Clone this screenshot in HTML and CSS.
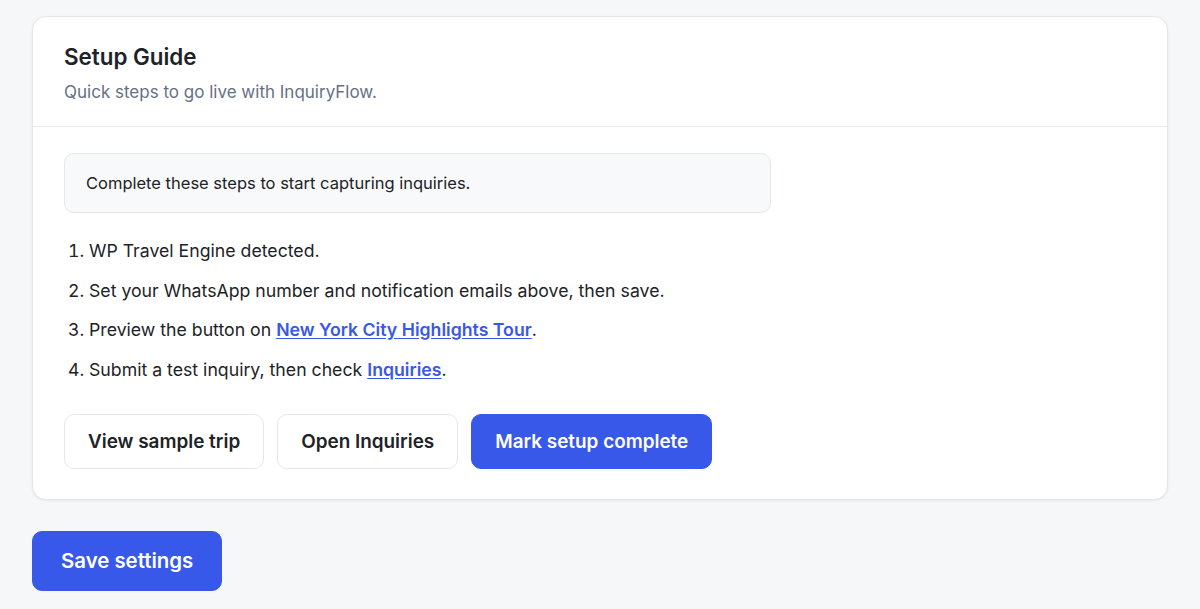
FILE: index.html
```html
<!DOCTYPE html>
<html lang="en">
<head>
<meta charset="utf-8">
<title>Setup Guide</title>
<link rel="stylesheet" href="styles.css">
</head>
<body>
<main class="page">
  <section class="card">
    <header class="card-head">
      <h2 class="card-title">Setup Guide</h2>
      <p class="card-sub">Quick steps to go live with InquiryFlow.</p>
    </header>
    <div class="card-body">
      <div class="notice">Complete these steps to start capturing inquiries.</div>
      <ol class="steps">
        <li>WP Travel Engine detected.</li>
        <li>Set your WhatsApp number and notification emails above, then save.</li>
        <li>Preview the button on <a href="#">New York City Highlights Tour</a>.</li>
        <li>Submit a test inquiry, then check <a href="#">Inquiries</a>.</li>
      </ol>
      <div class="actions">
        <button class="btn btn-ghost">View sample trip</button>
        <button class="btn btn-ghost">Open Inquiries</button>
        <button class="btn btn-primary">Mark setup complete</button>
      </div>
    </div>
  </section>
  <div class="footer">
    <button class="btn btn-primary btn-lg">Save settings</button>
  </div>
</main>
</body>
</html>
```
FILE: styles.css
```css
* { box-sizing: border-box; }
html, body { margin: 0; }
body {
  background: #f6f7f9;
  font-family: Inter, "Noto Sans", sans-serif;
  color: #1d2327;
}
.page {
  padding: 16px 32px 0 32px;
}
.card {
  background: #fff;
  border: 1px solid #e3e6ea;
  border-radius: 14px;
  box-shadow: 0 1px 3px rgba(16, 24, 40, 0.06);
}
.card-head {
  padding: 26px 31px 22px;
  border-bottom: 1px solid #e8eaee;
}
.card-title {
  margin: 0;
  font-size: 22.4px;
  font-weight: 600;
  line-height: 28px;
  color: #1d2327;
}
.card-sub {
  margin: 9px 0 0;
  font-size: 17px;
  line-height: 24px;
  color: #667085;
}
.card-body {
  padding: 26px 31px 30px;
}
.notice {
  width: 707px;
  background: #f8f9fb;
  border: 1px solid #e4e7eb;
  border-radius: 10px;
  padding: 17.5px 21px;
  font-size: 16.5px;
  line-height: 23px;
  color: #1d2327;
}
.steps {
  margin: 26px 0 0;
  padding: 0 0 0 25px;
  font-size: 17.7px;
  line-height: 24px;
  color: #1d2327;
}
.steps li {
  margin-bottom: 15.5px;
  padding-left: 0;
}
.steps a {
  color: #3858e9;
  font-weight: 600;
  text-decoration: underline;
  text-underline-offset: 2px;
}
.actions {
  display: flex;
  gap: 13px;
  margin-top: 32px;
}
.btn {
  font-family: inherit;
  font-size: 18.9px;
  font-weight: 600;
  height: 55px;
  padding: 0 23px;
  border-radius: 10px;
  cursor: pointer;
}
.btn-ghost {
  background: #fff;
  border: 1px solid #e4e7eb;
  color: #1d2327;
}
.btn-primary {
  background: #3858e9;
  border: 1px solid #3858e9;
  color: #fff;
}
.footer {
  margin-top: 31px;
}
.btn-lg {
  height: 60px;
  padding: 0 28px;
  font-size: 20.4px;
}
```
